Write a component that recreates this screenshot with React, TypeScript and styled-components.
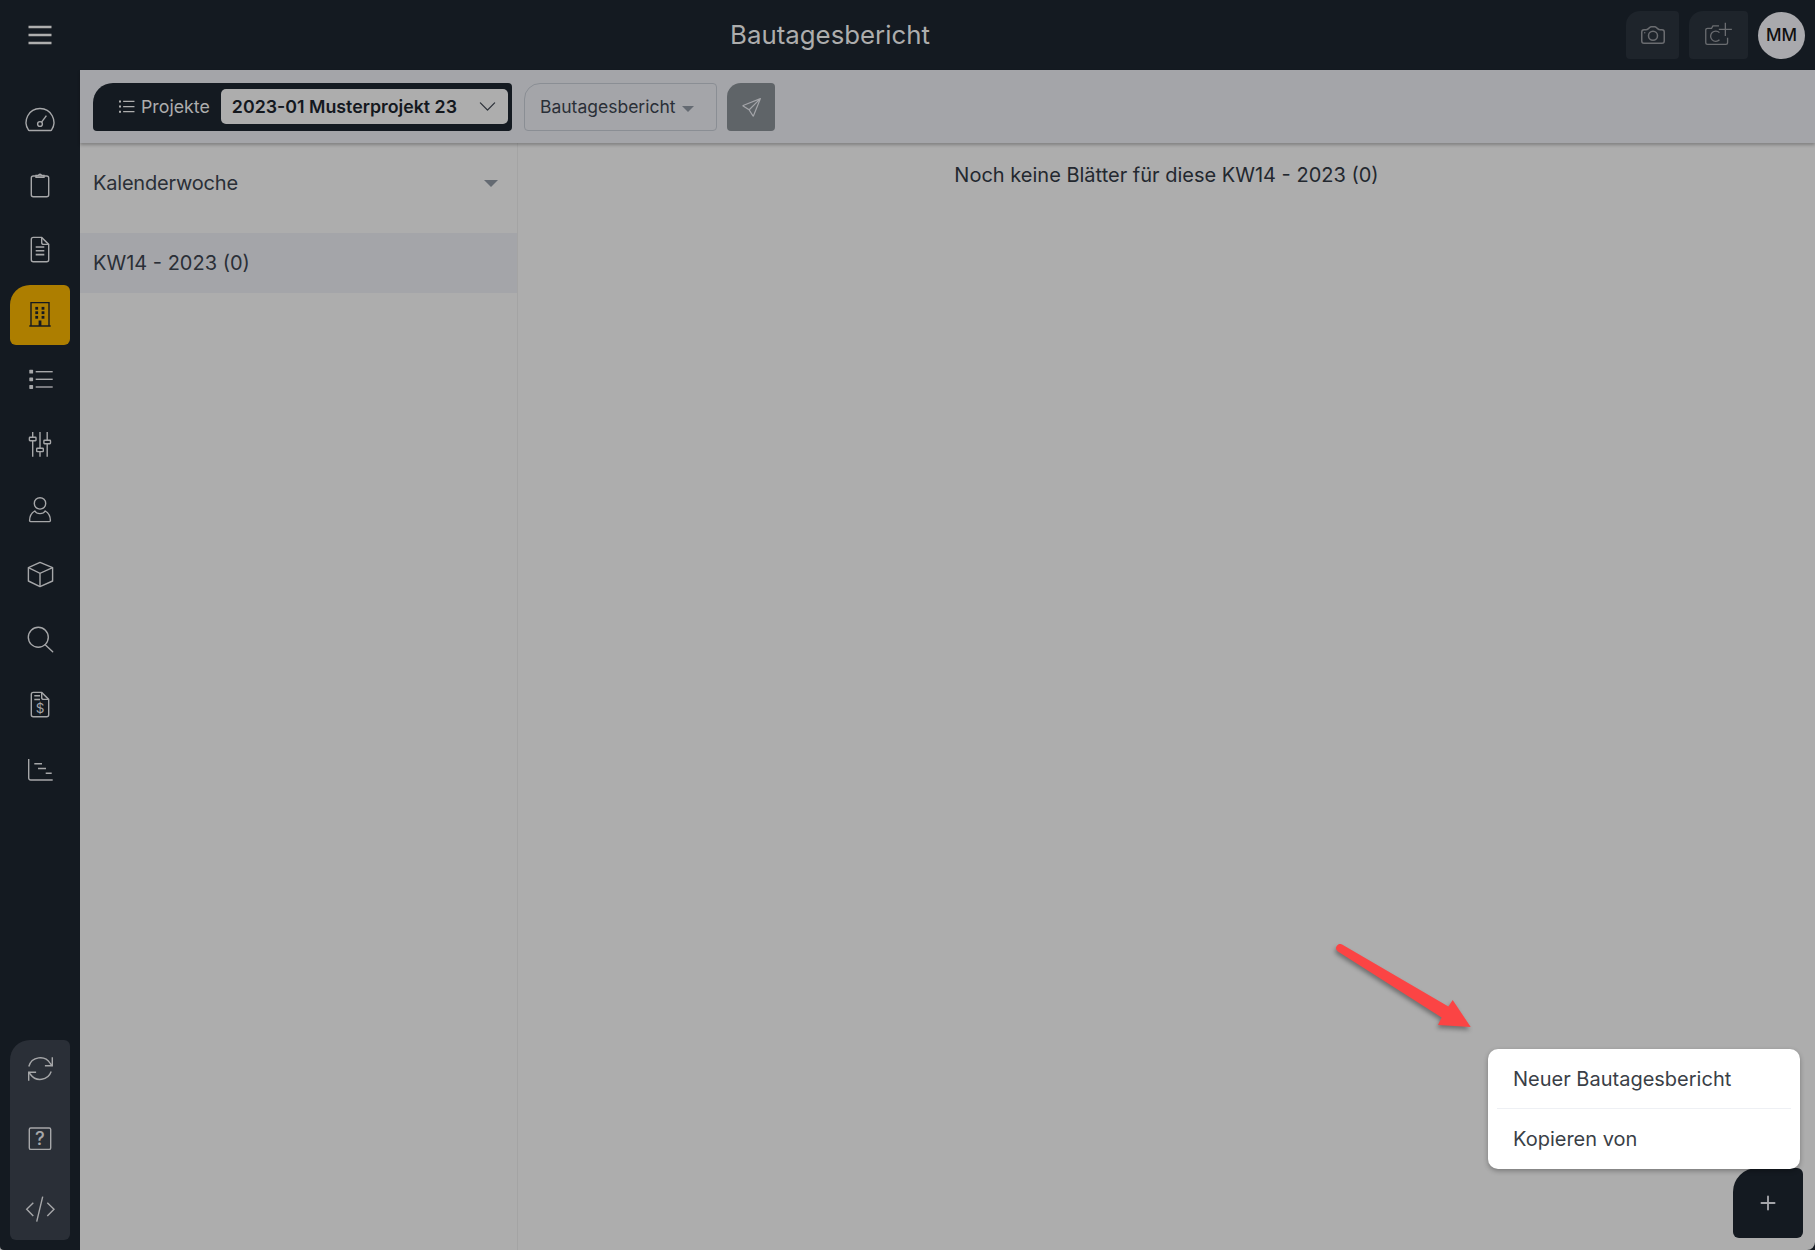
import type { ReactNode } from "react";
import styled, { createGlobalStyle } from "styled-components";
import { BsCamera, BsChevronDown, BsPlus, BsSend } from "react-icons/bs";

const GlobalStyle = createGlobalStyle`
  html, body {
    margin: 0;
    padding: 0;
    height: 100%;
    overflow: hidden;
    background: #141a21;
    font-family: Inter, "Liberation Sans", sans-serif;
  }
  * { box-sizing: border-box; }
`;

const Page = styled.div`
  position: relative;
  width: 1815px;
  height: 1250px;
  display: flex;
  flex-direction: column;
  overflow: hidden;
  border-radius: 0 0 8px 0;
  background: #adadad;
`;

const TopBar = styled.header`
  flex: 0 0 70px;
  display: flex;
  align-items: center;
  background: #141a21;
`;

const MenuButton = styled.div`
  width: 80px;
  display: flex;
  justify-content: center;
  color: #aeaeae;
`;

const Title = styled.h1`
  flex: 1;
  margin: 0 0 2px;
  text-align: center;
  font-size: 25.8px;
  font-weight: 400;
  color: #adadad;
`;

const TopActions = styled.div`
  width: 235px;
  padding-right: 10px;
  display: flex;
  justify-content: flex-end;
  align-items: center;
  gap: 10px;
`;

const CameraButton = styled.div<{ $width: number }>`
  width: ${(p) => p.$width}px;
  height: 48px;
  display: flex;
  align-items: center;
  justify-content: center;
  border-radius: 14px 4px 4px 4px;
  background: #1e242b;
  color: #6a6c70;
  font-size: 24px;
`;

const Avatar = styled.div`
  width: 47px;
  height: 47px;
  border-radius: 50%;
  display: flex;
  align-items: center;
  justify-content: center;
  background: #a9a9ad;
  color: #101010;
  font-size: 17px;
  font-weight: 500;
`;

const Body = styled.div`
  flex: 1;
  display: flex;
  min-height: 0;
`;

const Sidebar = styled.nav`
  flex: 0 0 80px;
  padding: 20px 10px 10px;
  display: flex;
  flex-direction: column;
  justify-content: space-between;
  border-radius: 0 0 0 4px;
  background: #141a21;
`;

const NavList = styled.div`
  display: flex;
  flex-direction: column;
  gap: 5px;
`;

const NavItem = styled.div<{ $active?: boolean }>`
  height: 60px;
  display: flex;
  align-items: center;
  justify-content: center;
  border-radius: 20px 6px 6px 6px;
  background: ${(p) => (p.$active ? "#ad7e00" : "transparent")};
  color: ${(p) => (p.$active ? "#141a21" : "#a6a7a9")};
`;

const BottomNav = styled.div`
  height: 200px;
  display: flex;
  flex-direction: column;
  gap: 12px;
  border-radius: 20px 6px 6px 6px;
  background: #2a2f37;
`;

const BottomItem = styled.div`
  height: 58px;
  display: flex;
  align-items: center;
  justify-content: center;
  color: #a6a7a9;
`;

const Main = styled.main`
  flex: 1;
  display: flex;
  flex-direction: column;
  min-width: 0;
`;

const Toolbar = styled.div`
  flex: 0 0 73px;
  padding: 13px 13px 12px;
  display: flex;
  align-items: stretch;
  gap: 10px;
  background: #a4a5a9;
  box-shadow: 0 2px 3px rgba(0, 0, 0, 0.25);
  position: relative;
  z-index: 1;
`;

const ProjectPicker = styled.div`
  width: 419px;
  margin-right: 2px;
  padding: 6px 4px 7px 23px;
  display: flex;
  align-items: stretch;
  gap: 11px;
  border-radius: 20px 4px 4px 4px;
  background: #141a21;
`;

const ProjectLabel = styled.div`
  display: flex;
  align-items: center;
  gap: 5px;
  color: #adadad;
  font-size: 17.8px;
  white-space: nowrap;
`;

const ProjectSelect = styled.div`
  flex: 1;
  padding: 0 11px 0 11px;
  display: flex;
  align-items: center;
  justify-content: space-between;
  border-radius: 5px;
  background: #adadad;
  color: #14181e;
  font-size: 17.8px;
  font-weight: 600;
  white-space: nowrap;
  svg {
    color: #2a2f37;
    font-size: 19px;
  }
`;

const ReportButton = styled.div`
  width: 193px;
  padding: 0 0 2px 15px;
  display: flex;
  align-items: center;
  gap: 6px;
  border: 1px solid #8a8e94;
  border-radius: 16px 4px 4px 4px;
  color: #2a2f37;
  font-size: 17.5px;
`;

const Caret = styled.span<{ $size?: number; $top?: number }>`
  display: inline-block;
  margin-top: ${(p) => p.$top ?? 5}px;
  border-left: ${(p) => p.$size ?? 6}px solid transparent;
  border-right: ${(p) => p.$size ?? 6}px solid transparent;
  border-top: ${(p) => p.$size ?? 6}px solid #646a72;
`;

const SendButton = styled.div`
  width: 48px;
  display: flex;
  align-items: center;
  justify-content: center;
  border-radius: 14px 4px 4px 4px;
  background: #5f6468;
  color: #a4a5a9;
  font-size: 19px;
`;

const Columns = styled.div`
  flex: 1;
  display: flex;
  min-height: 0;
`;

const WeekPanel = styled.aside`
  flex: 0 0 438px;
  border-right: 1px solid #a4a4a4;
`;

const WeekHeader = styled.div`
  height: 90px;
  padding: 28px 19px 0 13px;
  display: flex;
  justify-content: space-between;
  align-items: flex-start;
  color: #2a2f37;
  font-size: 20px;
  letter-spacing: -0.01em;
  line-height: 24px;
`;

const WeekRow = styled.div`
  height: 60px;
  padding-left: 13px;
  display: flex;
  align-items: center;
  background: #a4a5a9;
  color: #2a2f37;
  font-size: 20px;
`;

const EmptyArea = styled.section`
  flex: 1;
  padding-top: 20px;
  text-align: center;
  color: #23282f;
  font-size: 20px;
  line-height: 24px;
`;

const Popup = styled.div`
  position: absolute;
  left: 1488px;
  top: 1049px;
  width: 312px;
  height: 120px;
  padding: 0 9px;
  border-radius: 10px;
  background: #fff;
  box-shadow: 0 2px 5px rgba(0, 0, 0, 0.3);
  z-index: 3;
`;

const PopupItem = styled.div<{ $divider?: boolean }>`
  height: 60px;
  padding-left: 16px;
  display: flex;
  align-items: center;
  color: #3a3f47;
  font-size: 20px;
  border-bottom: ${(p) => (p.$divider ? "1px solid #eef0f4" : "none")};
`;

const Fab = styled.div`
  position: absolute;
  left: 1733px;
  top: 1168px;
  width: 70px;
  height: 70px;
  display: flex;
  align-items: center;
  justify-content: center;
  border-radius: 24px 6px 6px 6px;
  background: #141a21;
  color: #a4a5a9;
  font-size: 30px;
  z-index: 2;
`;

const ArrowMark = styled.svg`
  position: absolute;
  left: 1325px;
  top: 935px;
  z-index: 3;
  overflow: visible;
  filter: drop-shadow(-1px 3px 2px rgba(0, 0, 0, 0.35));
`;

const IconSvg = styled.svg`
  display: block;
  overflow: visible;
  fill: none;
  stroke: currentColor;
  stroke-width: 1.4;
`;

const Icon = ({ children, size = 30 }: { children: ReactNode; size?: number }) => (
  <IconSvg width={size} height={size} viewBox="0 0 30 30">
    {children}
  </IconSvg>
);

const IconLabel = styled.text`
  fill: currentColor;
  stroke: none;
  font-family: Inter, "Liberation Sans", sans-serif;
  text-anchor: middle;
`;

const MenuIcon = () => (
  <Icon>
    <path d="M3.5 7h23M3.5 15h23M3.5 23h23" strokeWidth="2.6" />
  </Icon>
);

const GaugeIcon = () => (
  <Icon>
    <path d="M4.3 25.5a1 1 0 0 1-.9-.6A13.8 13.8 0 0 1 15 3.5a13.8 13.8 0 0 1 11.6 21.4 1 1 0 0 1-.9.6z" />
    <circle cx="15" cy="19" r="2.4" />
    <path d="M16.6 17.2l4.8-6.5" />
  </Icon>
);

const ClipboardIcon = () => (
  <Icon>
    <rect x="6.3" y="6" width="17.4" height="20.7" rx="2" />
    <path d="M11 7.4V5.4h2.4a1.7 1.7 0 0 1 3.2 0H19v2z" />
  </Icon>
);

const FileIcon = () => (
  <Icon>
    <path d="M8.3 2.4h8.4l7 7v15.3a2 2 0 0 1-2 2H8.3a2 2 0 0 1-2-2V4.4a2 2 0 0 1 2-2z" />
    <path d="M16.7 2.4v5a2 2 0 0 0 2 2h5" />
    <path d="M10.7 12h8.6M10.7 15.8h8.6M10.7 19.6h8.6" strokeWidth="1.6" />
  </Icon>
);

const BuildingIcon = () => (
  <Icon>
    <path d="M6 26V2.6h18V26M4.3 26h21.4" strokeWidth="1.4" />
    {[11.7, 18].map((x) =>
      [8.3, 12.7, 17.3].map((y) => (
        <rect key={`${x}-${y}`} x={x - 1.4} y={y - 1.4} width="2.8" height="2.8" fill="currentColor" stroke="none" />
      ))
    )}
    <rect x="13.6" y="20.5" width="2.8" height="5.5" fill="currentColor" stroke="none" />
  </Icon>
);

const ListIcon = () => (
  <Icon>
    {[6.7, 14.3, 22].map((y) => (
      <g key={y}>
        <rect x="4.3" y={y - 1.9} width="3.8" height="3.8" rx="0.6" fill="currentColor" stroke="none" />
        <path d={`M10.7 ${y}H27.7`} />
      </g>
    ))}
  </Icon>
);

const SlidersIcon = () => (
  <Icon>
    <path d="M7.7 2v5.3M7.7 10.7V26.7M15 2v16M15 21.7v5M22.2 2v8.3M22.2 13.7v13" strokeWidth="1.4" />
    <rect x="4.4" y="7.3" width="6.6" height="3.4" rx="0.6" />
    <rect x="11.7" y="18.2" width="6.6" height="3.4" rx="0.6" />
    <rect x="18.9" y="10.3" width="6.6" height="3.4" rx="0.6" />
  </Icon>
);

const PersonIcon = () => (
  <Icon>
    <circle cx="15" cy="8.4" r="5.7" />
    <path d="M5.6 26.6a1 1 0 0 1-1-1c0-4.3 2.4-8 5.2-9.6 1 1.8 2.8 2.6 5.2 2.6s4.2-.8 5.2-2.6c2.8 1.6 5.2 5.3 5.2 9.6a1 1 0 0 1-1 1z" />
  </Icon>
);

const BoxIcon = () => (
  <Icon>
    <path d="M15 2.4l12.6 5.2V21L15 26.6 3.4 21V7.6z" strokeLinejoin="round" />
    <path d="M3.4 7.6L15 13.3l12.6-5.7M15 13.3v13.3" />
  </Icon>
);

const SearchIcon = () => (
  <Icon>
    <circle cx="13.3" cy="12.3" r="10" />
    <path d="M20.2 19.8l7.5 7" strokeLinecap="round" />
  </Icon>
);

const InvoiceIcon = () => (
  <Icon>
    <path d="M8.3 2.4h8.4l7 7v15.3a2 2 0 0 1-2 2H8.3a2 2 0 0 1-2-2V4.4a2 2 0 0 1 2-2z" />
    <path d="M16.7 2.4v5a2 2 0 0 0 2 2h5" />
    <path d="M9.3 5.8H15M9.3 9.6H15" strokeWidth="1.5" />
    <IconLabel x="15" y="23.4" fontSize="13.5">
      $
    </IconLabel>
  </Icon>
);

const StepsIcon = () => (
  <Icon>
    <path d="M3.7 4v19a2 2 0 0 0 2 2h22" />
    <path d="M9.3 8.7H17M13 13.5h8M20.7 18.3h6" strokeWidth="1.4" />
  </Icon>
);

const RefreshIcon = () => (
  <Icon>
    <path d="M27.3 3.3v8.4H19.9M3.7 26.7v-8.4h7.4" />
    <path d="M3.8 12.5A11.8 11.8 0 0 1 25.3 9.5L27.3 11.7M26.2 17.5A11.8 11.8 0 0 1 5.5 20.5L3.7 18.3" />
  </Icon>
);

const QuestionIcon = () => (
  <Icon>
    <rect x="4.3" y="4" width="21.4" height="21.4" rx="1.5" />
    <IconLabel x="15" y="21.4" fontSize="18.5" fontWeight="500">
      ?
    </IconLabel>
  </Icon>
);

const CodeIcon = () => (
  <Icon>
    <path d="M8.3 8.7L1.7 15.3 8.3 22M22.3 8.7L29 15.3 22.3 22M17.7 2.7L11.7 27.7" />
  </Icon>
);

const CameraPlusIcon = () => (
  <Icon size={28}>
    <path d="M15 5.2H8.5L7 7.8H2.8a2 2 0 0 0-2 2V23a2 2 0 0 0 2 2h19.4a2 2 0 0 0 2-2v-5" />
    <path d="M15.5 12.5a5.5 5.5 0 1 0 0 7.6" />
    <path d="M21.8 2v14M14.8 9h14" />
  </Icon>
);

const navIcons: { icon: ReactNode; active?: boolean }[] = [
  { icon: <GaugeIcon /> },
  { icon: <ClipboardIcon /> },
  { icon: <FileIcon /> },
  { icon: <BuildingIcon />, active: true },
  { icon: <ListIcon /> },
  { icon: <SlidersIcon /> },
  { icon: <PersonIcon /> },
  { icon: <BoxIcon /> },
  { icon: <SearchIcon /> },
  { icon: <InvoiceIcon /> },
  { icon: <StepsIcon /> },
];

function App() {
  return (
    <Page>
      <GlobalStyle />
      <TopBar>
        <MenuButton>
          <MenuIcon />
        </MenuButton>
        <Title>Bautagesbericht</Title>
        <TopActions>
          <CameraButton $width={53}>
            <BsCamera />
          </CameraButton>
          <CameraButton $width={59}>
            <CameraPlusIcon />
          </CameraButton>
          <Avatar>MM</Avatar>
        </TopActions>
      </TopBar>
      <Body>
        <Sidebar>
          <NavList>
            {navIcons.map((item, i) => (
              <NavItem key={i} $active={item.active}>
                {item.icon}
              </NavItem>
            ))}
          </NavList>
          <BottomNav>
            <BottomItem>
              <RefreshIcon />
            </BottomItem>
            <BottomItem>
              <QuestionIcon />
            </BottomItem>
            <BottomItem>
              <CodeIcon />
            </BottomItem>
          </BottomNav>
        </Sidebar>
        <Main>
          <Toolbar>
            <ProjectPicker>
              <ProjectLabel>
                <Icon size={20}>
                  <path d="M10.7 6.7H27.7M10.7 14.3H27.7M10.7 22H27.7" strokeWidth="1.8" />
                  <path d="M4.5 6.7h3M4.5 14.3h3M4.5 22h3" strokeWidth="3" />
                </Icon>
                Projekte
              </ProjectLabel>
              <ProjectSelect>
                2023-01 Musterprojekt 23
                <BsChevronDown />
              </ProjectSelect>
            </ProjectPicker>
            <ReportButton>
              Bautagesbericht
              <Caret />
            </ReportButton>
            <SendButton>
              <BsSend />
            </SendButton>
          </Toolbar>
          <Columns>
            <WeekPanel>
              <WeekHeader>
                Kalenderwoche
                <Caret $size={7} $top={9} />
              </WeekHeader>
              <WeekRow>KW14 - 2023 (0)</WeekRow>
            </WeekPanel>
            <EmptyArea>Noch keine Blätter für diese KW14 - 2023 (0)</EmptyArea>
          </Columns>
        </Main>
      </Body>
      <ArrowMark width="150" height="100" viewBox="0 0 150 100">
        <path
          d="M17.1 9.6L123.4 71.4 127.7 65 145.7 92 113 90 116.6 82.6 12.9 16.4A4 4 0 0 1 17.1 9.6Z"
          fill="#fb4444"
        />
      </ArrowMark>
      <Popup>
        <PopupItem $divider>Neuer Bautagesbericht</PopupItem>
        <PopupItem>Kopieren von</PopupItem>
      </Popup>
      <Fab>
        <BsPlus />
      </Fab>
    </Page>
  );
}

export default App;
